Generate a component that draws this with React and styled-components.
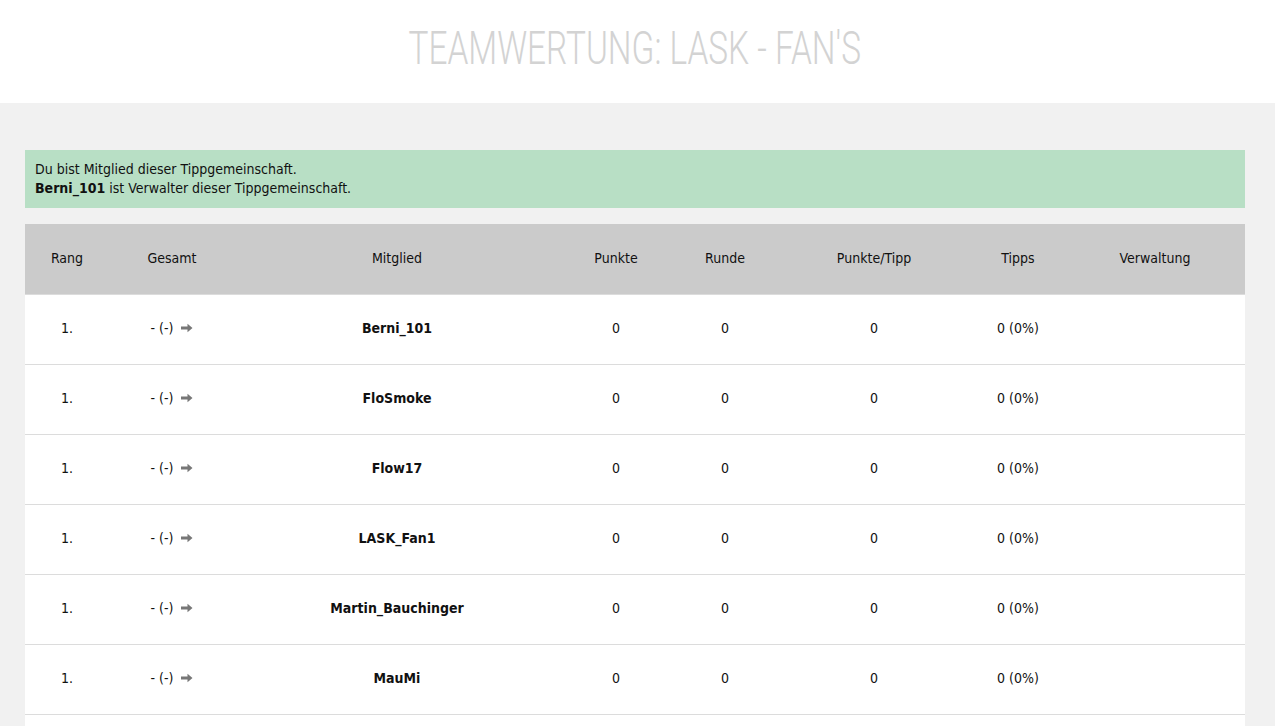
import React from "react";
import styled, { createGlobalStyle } from "styled-components";

const Global = createGlobalStyle`
  html, body { margin: 0; padding: 0; }
  body {
    background: #f1f1f1;
    font-family: "Liberation Sans Narrow", "DejaVu Sans Condensed", "Roboto", sans-serif;
    color: #111;
    font-size: 14px;
  }
`;

const Header = styled.header`
  background: #fff;
  height: 103px;
  display: flex;
  align-items: center;
  justify-content: center;
  overflow: hidden;
`;

const Title = styled.h1`
  margin: 0;
  font-family: "Roboto", sans-serif;
  font-weight: 300;
  font-size: 47px;
  color: #d3d3d3;
  white-space: nowrap;
  transform: scaleX(0.71);
  transform-origin: center;
  padding-bottom: 8px;
  padding-right: 8px;
`;

const Main = styled.main`
  padding: 47px 30px 0 25px;
  display: flex;
  flex-direction: column;
  gap: 16px;
`;

const Notice = styled.div`
  background: #b8dfc5;
  padding: 10px 10px 10px;
  line-height: 19px;
  font-size: 14px;
  color: #111;
  b { font-weight: 700; }
`;

const cols = "84px 126px 324px 114px 104px 194px 94px 180px";

const Table = styled.div`
  display: flex;
  flex-direction: column;
  background: #fff;
`;

const Row = styled.div`
  display: grid;
  grid-template-columns: ${cols};
  height: 70px;
  align-items: center;
  padding-bottom: ${(p) => (p.$head ? "2px" : "3px")};
  background: ${(p) => (p.$head ? "#cbcbcb" : "#fff")};
  border-top: ${(p) => (p.$head ? "none" : "1px solid #dcdcdc")};
  box-sizing: border-box;
`;

const Cell = styled.div`
  text-align: center;
  font-weight: ${(p) => (p.$bold ? 700 : 400)};
  font-size: 14px;
  color: #111;
  display: flex;
  justify-content: center;
  align-items: center;
  gap: 8px;
`;

const Arrow = () => (
  <svg width="12" height="10" viewBox="0 0 12 10">
    <path d="M0 3.6 H6.5 V0.8 L11.5 5 L6.5 9.2 V6.4 H0 Z" fill="#777" />
  </svg>
);

const members = ["Berni_101", "FloSmoke", "Flow17", "LASK_Fan1", "Martin_Bauchinger", "MauMi", "Mike"];

export default function App() {
  return (
    <>
      <Global />
      <Header>
        <Title>TEAMWERTUNG: LASK - FAN'S</Title>
      </Header>
      <Main>
        <Notice>
          Du bist Mitglied dieser Tippgemeinschaft.
          <br />
          <b>Berni_101</b> ist Verwalter dieser Tippgemeinschaft.
        </Notice>
        <Table>
          <Row $head>
            <Cell>Rang</Cell>
            <Cell>Gesamt</Cell>
            <Cell>Mitglied</Cell>
            <Cell>Punkte</Cell>
            <Cell>Runde</Cell>
            <Cell>Punkte/Tipp</Cell>
            <Cell>Tipps</Cell>
            <Cell>Verwaltung</Cell>
          </Row>
          {members.map((m) => (
            <Row key={m}>
              <Cell>1.</Cell>
              <Cell>
                <span>- (-)</span>
                <Arrow />
              </Cell>
              <Cell $bold>{m}</Cell>
              <Cell>0</Cell>
              <Cell>0</Cell>
              <Cell>0</Cell>
              <Cell>0 (0%)</Cell>
              <Cell></Cell>
            </Row>
          ))}
        </Table>
      </Main>
    </>
  );
}
